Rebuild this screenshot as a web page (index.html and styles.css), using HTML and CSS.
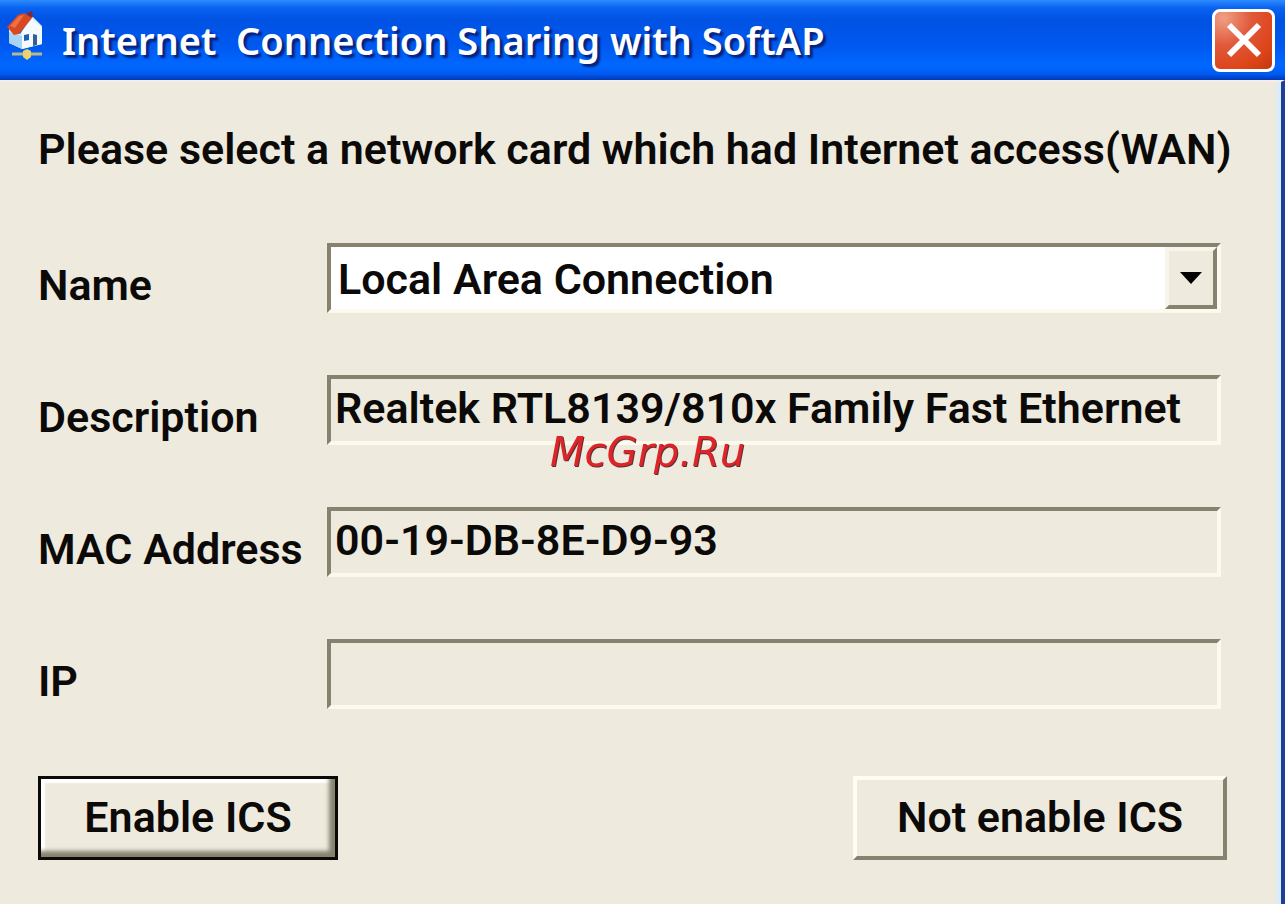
FILE: index.html
```html
<!DOCTYPE html>
<html lang="en">
<head>
    <meta charset="UTF-8">
    <meta name="viewport" content="width=device-width, initial-scale=1.0">
    <title>Internet Connection Sharing with SoftAP</title>
    <link rel="stylesheet" href="styles.css">
</head>
<body>
    <header class="titlebar">
        <svg class="app-icon" viewBox="5 11 37 50" aria-hidden="true">
            <path d="M8 28 L8 43 L21 49 L41 44 L41 26 L31 16 L19 34 Z" fill="#d9effb"/>
            <path d="M21 32 L31 19 L41 28 L41 44 L21 49 Z" fill="#f4fbff"/>
            <path d="M8 32 L21 36 L21 49 L8 43 Z" fill="#a9d3f3"/>
            <path d="M26 13 L31 11 L32 17 L28 19 Z" fill="#7a2c3c"/>
            <path d="M6 27 L17 15 L23 13 L31 18 L18 34 L13 35 Z" fill="#d9481f"/>
            <path d="M9 26 L18 16 L23 15 L14 28 Z" fill="#ee7045"/>
            <path d="M23 35 L28 34 L28 40 L23 41 Z" fill="#1e5fb4"/>
            <path d="M32 34 L36 35 L36 45 L32 46 Z" fill="#34618f"/>
            <path d="M11 54 H41" stroke="#b7b98a" stroke-width="3"/>
            <path d="M22 51 L26 49 L30 51 L30 57 L26 60 L22 57 Z" fill="#e8d36a"/>
        </svg>
        <h1>Internet&nbsp; Connection Sharing with SoftAP</h1>
        <button type="button" class="close" aria-label="Close">
            <svg viewBox="0 0 36 36" aria-hidden="true">
                <path d="M3 3 L33 33 M33 3 L3 33" stroke="#fff" stroke-width="6"/>
            </svg>
        </button>
    </header>

    <main>
        <p class="intro">Please select a network card which had Internet access(WAN)</p>

        <form>
            <label for="name">Name</label>
            <div class="combo">
                <select id="name">
                    <option>Local Area Connection</option>
                </select>
                <span class="arrow">
                    <svg viewBox="0 0 22 12" aria-hidden="true"><path d="M0 0 H22 L11 12 Z"/></svg>
                </span>
            </div>

            <label for="description">Description</label>
            <input type="text" id="description" value="Realtek RTL8139/810x Family Fast Ethernet" readonly>

            <label for="mac">MAC Address</label>
            <input type="text" id="mac" value="00-19-DB-8E-D9-93" readonly>

            <label for="ip">IP</label>
            <input type="text" id="ip" value="" readonly>
        </form>

        <div class="buttons">
            <button type="button" class="btn default">Enable ICS</button>
            <button type="button" class="btn">Not enable ICS</button>
        </div>
    </main>

    <div class="watermark">McGrp.Ru</div>
</body>
</html>
```

FILE: styles.css
```css
* {
    box-sizing: border-box;
}
body {
    margin: 0;
    min-height: 100vh;
    display: flex;
    flex-direction: column;
    background-color: #eeeade;
    color: #0c0a08;
    font-family: Roboto, "Liberation Sans", sans-serif;
    font-size: 43px;
    font-weight: 600;
    line-height: 48px;
}
.titlebar {
    display: flex;
    align-items: center;
    height: 80px;
    padding: 0 10px 0 6px;
    background: linear-gradient(#2d8cff 0, #0a62f0 8px, #0052e2 20px, #0058f0 45px, #0068ff 66px, #005af0 74px, #0038b8 80px);
}
.titlebar h1 {
    flex: 1;
    margin: 0 0 0 19px;
    color: #fff;
    font-family: "Noto Sans", sans-serif;
    font-size: 38px;
    font-weight: 600;
    text-shadow: 3px 3px 2px #06237c;
}
.app-icon {
    width: 37px;
    height: 50px;
    margin-bottom: 8px;
}
.close {
    display: flex;
    align-items: center;
    justify-content: center;
    width: 63px;
    height: 63px;
    padding: 0;
    border: 3px solid #fff;
    border-radius: 8px;
    background: radial-gradient(circle at 15% 10%, #f0a085 0, #e0583a 40%, #dd4418 75%, #c03a10 100%);
}
.close svg {
    width: 36px;
    height: 36px;
}
main {
    flex: 1;
    padding: 43px 54px 44px 38px;
    border-top: 2px solid #f6ecec;
    border-right: 4px solid #1c3f98;
    box-shadow: inset -5px 0 #dcebf5;
}
.intro {
    margin: 0 0 70px;
    white-space: nowrap;
}
form {
    display: grid;
    grid-template-columns: 289px 1fr;
    row-gap: 62px;
    align-items: center;
    padding-right: 6px;
}
label {
    padding-top: 14px;
}
input,
.combo {
    width: 100%;
    height: 70px;
    border: 4px solid;
    border-color: #86826f #fcfaec #fcfaec #86826f;
}
input {
    padding: 0 4px 4px;
    border-radius: 0;
    background-color: #eeeade;
    color: inherit;
    font: inherit;
    outline: none;
}
.combo {
    position: relative;
    background-color: #fff;
}
select {
    width: 100%;
    height: 62px;
    padding: 2px 60px 0 7px;
    border: none;
    appearance: none;
    background-color: #fff;
    color: inherit;
    font: inherit;
    outline: none;
}
.arrow {
    position: absolute;
    top: 0;
    right: 0;
    bottom: 0;
    display: flex;
    align-items: center;
    justify-content: center;
    width: 52px;
    border: 4px solid;
    border-color: #f8f5ea #86826f #86826f #f8f5ea;
    background-color: #eeeade;
    pointer-events: none;
}
.arrow svg {
    width: 22px;
    height: 12px;
}
.buttons {
    display: flex;
    justify-content: space-between;
    margin-top: 67px;
}
.btn {
    width: 374px;
    height: 84px;
    padding: 0 0 2px;
    border: 4px solid;
    border-color: #fffdf0 #86826f #86826f #fffdf0;
    background-color: #eeeade;
    color: inherit;
    font: inherit;
}
.btn.default {
    width: 300px;
    border: 3px solid #0c0a08;
    box-shadow: inset -6px -6px 4px #86826f, inset 4px 4px 2px #fff;
}
.watermark {
    position: fixed;
    top: 50%;
    left: 50%;
    padding-left: 10px;
    transform: translate(-50%, -50%);
    color: #df2428;
    font-family: "DejaVu Sans", sans-serif;
    font-size: 40px;
    font-style: italic;
    font-weight: 400;
    text-shadow: 1px 1px #5a3038;
    pointer-events: none;
}
```
